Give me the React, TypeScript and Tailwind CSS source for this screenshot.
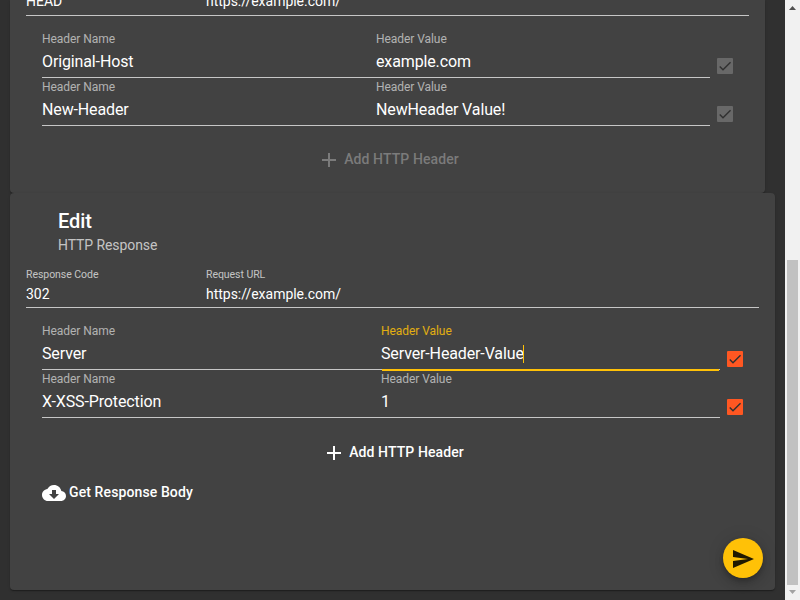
import React from "react";

const cardShadow =
  "shadow-[0_2px_1px_-1px_rgba(0,0,0,0.2),0_1px_1px_0_rgba(0,0,0,0.14),0_1px_3px_0_rgba(0,0,0,0.12)]";

function Field({ label, value, focused = false }: { label: string; value: string; focused?: boolean }) {
  return (
    <div className="relative flex h-12 flex-1 flex-col border-b border-[#c6c6c6]">
      <span
        className={`h-[18px] text-[12px] leading-[18px] tracking-[-0.06px] ${focused ? "text-[#ffc107]/85" : "text-white/60"}`}
      >
        {label}
      </span>
      <div className="mt-0.5 flex h-6 items-center text-[16px] leading-6 tracking-[-0.13px] text-white">
        <span>{value}</span>
        {focused && <i className="-ml-px h-[18px] w-px bg-[#ffc107]" />}
      </div>
      {focused && <div className="absolute right-px -bottom-[2px] left-px h-[2px] bg-[#ffc107]" />}
    </div>
  );
}

function Check({ disabled }: { disabled: boolean }) {
  return (
    <span
      className={`ml-[7px] flex h-4 w-4 shrink-0 rounded-[1px] ${disabled ? "mt-7 bg-[#686868]" : "mt-[29px] bg-[#ff5722]"}`}
    >
      <svg viewBox="0 0 24 24" className="h-4 w-4" fill="none">
        <path d="M4.1 12.7 9 17.6 20.3 6.3" stroke="#303030" strokeWidth="2.13" />
      </svg>
    </span>
  );
}

function HeaderRow({
  name,
  value,
  disabled = false,
  focused = false,
}: {
  name: string;
  value: string;
  disabled?: boolean;
  focused?: boolean;
}) {
  return (
    <div className="flex h-12">
      <Field label="Header Name" value={name} />
      <Field label="Header Value" value={value} focused={focused} />
      <Check disabled={disabled} />
    </div>
  );
}

function AddButton({ disabled = false }: { disabled?: boolean }) {
  return (
    <div className={`flex h-9 items-center justify-center pl-px ${disabled ? "text-[#7b7b7b]" : "text-white"}`}>
      <svg viewBox="0 0 24 24" className="mt-0.5 mr-[3px] h-6 w-6" fill="currentColor">
        <path d="M19 13h-6v6h-2v-6H5v-2h6V5h2v6h6v2z" />
      </svg>
      <span className="text-[14px] font-medium tracking-[0.1px]">Add HTTP Header</span>
    </div>
  );
}

function UrlCell({ label, value }: { label?: string; value: string }) {
  return (
    <div>
      {label && <div className="h-[18px] text-[10.5px] leading-[18px] tracking-[-0.05px] text-white/70">{label}</div>}
      <div className="text-[14px] leading-5 tracking-[-0.02px] text-white">{value}</div>
    </div>
  );
}

export default function App() {
  return (
    <div className="flex h-[600px] w-[800px] overflow-hidden bg-[#303030] font-[Roboto,sans-serif]">
      <main className="flex w-[785px] flex-col pl-[10px]">
        <section className={`h-[193px] w-[755px] shrink-0 rounded-b-[4px] bg-[#424242] px-4 ${cardShadow}`}>
          <div className="flex h-4 border-b border-[#c6c6c6]">
            <div className="-mt-[9px] flex">
              <div className="w-[180px]">
                <UrlCell value="HEAD" />
              </div>
              <UrlCell value="https://example.com/" />
            </div>
          </div>
          <div className="mt-[14px] px-4">
            <HeaderRow name="Original-Host" value="example.com" disabled />
            <HeaderRow name="New-Header" value="NewHeader Value!" disabled />
          </div>
          <div className="mt-[15px]">
            <AddButton disabled />
          </div>
        </section>

        <section className={`relative h-[397px] w-[765px] shrink-0 rounded-[4px] bg-[#424242] px-4 pt-4 ${cardShadow}`}>
          <header className="pl-8">
            <h1 className="text-[20px] leading-6 font-medium tracking-[-0.1px] text-white">Edit</h1>
            <p className="mt-[2px] text-[14px] leading-5 tracking-[-0.09px] text-white/70">HTTP Response</p>
          </header>
          <div className="mt-[11px] flex h-[42px] border-b border-[#c6c6c6]">
            <div className="w-[180px]">
              <UrlCell label="Response Code" value="302" />
            </div>
            <UrlCell label="Request URL" value="https://example.com/" />
          </div>
          <div className="mt-[14px] px-4">
            <HeaderRow name="Server" value="Server-Header-Value" focused />
            <HeaderRow name="X-XSS-Protection" value="1" />
          </div>
          <div className="mt-4">
            <AddButton />
          </div>
          <div className="mt-[10px] flex items-start gap-[3px] pl-4 text-white">
            <svg viewBox="0 0 24 24" className="mt-px h-6 w-6" fill="currentColor">
              <path d="M19.35 10.04C18.67 6.59 15.64 4 12 4 9.11 4 6.6 5.64 5.35 8.04 2.34 8.36 0 10.91 0 14c0 3.31 2.69 6 6 6h13c2.76 0 5-2.24 5-5 0-2.64-2.05-4.78-4.65-4.96zM17 13l-5 5-5-5h3V9h4v4h3z" />
            </svg>
            <span className="text-[14px] leading-6 font-medium tracking-[0.11px]">Get Response Body</span>
          </div>
          <button
            aria-label="Send"
            className="absolute right-3 bottom-3 flex h-10 w-10 items-center justify-center rounded-full bg-[#ffc107] shadow-[0_3px_5px_-1px_rgba(0,0,0,0.2),0_6px_10px_0_rgba(0,0,0,0.14),0_1px_18px_0_rgba(0,0,0,0.12)]"
          >
            <svg viewBox="0 0 24 24" className="mt-0.5 h-6 w-6" fill="black" fillOpacity="0.87">
              <path d="M2.01 21L23 12 2.01 3 2 10l15 2-15 2z" />
            </svg>
          </button>
        </section>
      </main>

      <aside className="flex w-[15px] flex-col items-center bg-[#f1f1f1]">
        <svg viewBox="0 0 15 15" className="h-[15px] w-[15px]">
          <path d="M4 10h7L7.5 6z" fill="#505050" />
        </svg>
        <div className="mt-[245px] h-[325px] w-[11px] bg-[#c1c1c1]" />
        <svg viewBox="0 0 15 15" className="h-[15px] w-[15px]">
          <path d="M4 5h7L7.5 9z" fill="#a3a3a3" />
        </svg>
      </aside>
    </div>
  );
}
